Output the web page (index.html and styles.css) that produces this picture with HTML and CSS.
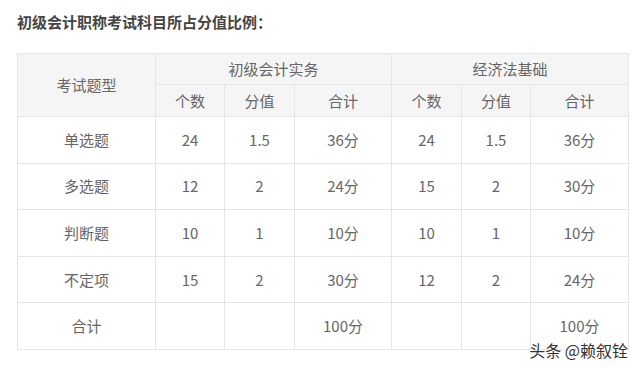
FILE: index.html
```html
<!DOCTYPE html>
<html lang="zh">
<head>
<meta charset="utf-8">
<link rel="stylesheet" href="styles.css">
</head>
<body>
<div class="page">
  <h1 class="title">初级会计职称考试科目所占分值比例：</h1>
  <table class="score">
    <colgroup>
      <col class="c0"><col class="c1"><col class="c2"><col class="c3"><col class="c4"><col class="c5"><col class="c6">
    </colgroup>
    <thead>
      <tr class="h1">
        <th rowspan="2">考试题型</th>
        <th colspan="3">初级会计实务</th>
        <th colspan="3">经济法基础</th>
      </tr>
      <tr class="h2">
        <th>个数</th><th>分值</th><th>合计</th>
        <th>个数</th><th>分值</th><th>合计</th>
      </tr>
    </thead>
    <tbody>
      <tr><td>单选题</td><td>24</td><td>1.5</td><td>36分</td><td>24</td><td>1.5</td><td>36分</td></tr>
      <tr><td>多选题</td><td>12</td><td>2</td><td>24分</td><td>15</td><td>2</td><td>30分</td></tr>
      <tr><td>判断题</td><td>10</td><td>1</td><td>10分</td><td>10</td><td>1</td><td>10分</td></tr>
      <tr><td>不定项</td><td>15</td><td>2</td><td>30分</td><td>12</td><td>2</td><td>24分</td></tr>
      <tr><td>合计</td><td></td><td></td><td>100分</td><td></td><td></td><td>100分</td></tr>
    </tbody>
  </table>
  <div class="watermark">头条 @赖叙铨</div>
</div>
</body>
</html>
```
FILE: styles.css
```css
html, body {
  margin: 0;
  padding: 0;
  background: #fff;
}
body {
  font-family: "Noto Sans CJK SC", "Microsoft YaHei", sans-serif;
  color: #666;
}
.page {
  position: relative;
  width: 640px;
  height: 368px;
  padding: 12px 0 0 17px;
  box-sizing: border-box;
}
.title {
  margin: 0;
  font-size: 15px;
  line-height: 20px;
  font-weight: bold;
  color: #444;
}
.score {
  margin-top: 21px;
  border-collapse: collapse;
  table-layout: fixed;
  width: 612px;
  font-size: 15px;
}
.c0 { width: 138px; }
.c1 { width: 69px; }
.c2 { width: 70px; }
.c3 { width: 97px; }
.c4 { width: 70px; }
.c5 { width: 69px; }
.c6 { width: 98px; }
.score th, .score td {
  border: 1px solid #e6e6e6;
  text-align: center;
  padding: 0;
  font-weight: normal;
  line-height: 20px;
}
.score thead th {
  background: #f5f5f5;
}
.h1 { height: 31px; }
.h2 { height: 32px; }
.score tbody tr { height: 46.6px; }
.watermark {
  position: absolute;
  right: 12px;
  bottom: 8px;
  font-size: 16px;
  line-height: 20px;
  color: #333;
  text-shadow: 0 0 2px #fff, 0 0 2px #fff;
}
```
